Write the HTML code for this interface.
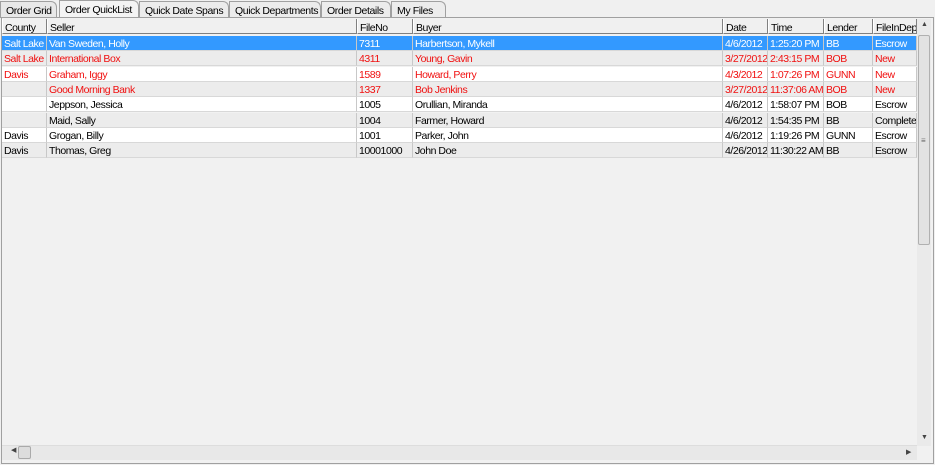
<!DOCTYPE html><html><head><style>
*{margin:0;padding:0;box-sizing:border-box}
body{width:935px;height:465px;background:#f0f0f0;font-family:"Liberation Sans",sans-serif;font-size:10.5px;position:relative;overflow:hidden}
.tab{position:absolute;top:1px;height:17px;border:1px solid #a0a0a0;border-bottom:none;background:#ececec;padding:3px 0 0 5px;color:#000;font-size:10.5px;white-space:nowrap;overflow:hidden;border-top-right-radius:6px;letter-spacing:-0.4px}
.grid{position:absolute;left:1px;top:17px;width:933px;height:447px;border:1px solid #a0a0a0;background:#f1f1f1}
.row{position:absolute;left:2px;width:915px;height:15px}
.c{position:absolute;top:0;height:100%;padding:2px 0 0 2px;white-space:nowrap;overflow:hidden;border-right:1px solid #c8c8c8;border-bottom:1px solid #d8d8d8;letter-spacing:-0.45px}
.h .c{border-right:1px solid #808080;border-left:1px solid #fff;border-bottom:1px solid #808080;background:#f0f0f0;padding-top:3px}
.red{color:#f01010}.sel{background:#3399ff;color:#fff}
.w{background:#fff}.g{background:#ececec}
</style></head><body>
<div class="tab" style="left:0;width:57px;background:#e8e8e8">Order Grid</div>
<div class="tab" style="left:59px;width:80px;background:#f4f4f4;top:0;height:19px">Order QuickList</div>
<div class="tab" style="left:139px;width:90px">Quick Date Spans</div>
<div class="tab" style="left:229px;width:92px">Quick Departments</div>
<div class="tab" style="left:321px;width:70px">Order Details</div>
<div class="tab" style="left:391px;width:55px">My Files</div>
<div class="grid"></div>
<div style="position:absolute;left:917px;top:19px;width:14px;height:427px;background:#eaeaea"></div>
<div style="position:absolute;left:918px;top:35px;width:12px;height:210px;background:#e2e2e2;border:1px solid #b0b0b0;border-radius:2px"></div>
<div style="position:absolute;left:921px;top:136px;font-size:8px;color:#666">≡</div>
<div style="position:absolute;left:921px;top:21px;font-size:7px;color:#444">▲</div>
<div style="position:absolute;left:921px;top:434px;font-size:7px;color:#444">▼</div>
<div style="position:absolute;left:2px;top:445px;width:915px;height:15px;background:#e8e8e8;border-top:1px solid #ddd"></div>
<div style="position:absolute;left:11px;top:446px;width:6px;height:13px;font-size:7px;color:#444">◀</div>
<div style="position:absolute;left:18px;top:446px;width:13px;height:13px;background:#ddd;border:1px solid #aaa;border-radius:2px"></div>
<div style="position:absolute;left:906px;top:448px;font-size:7px;color:#444">▶</div>
<script>
var xs=[2,47,357,413,723,768,824,873,917];
function row(top,cls,vals,hdr){var d=document.createElement('div');d.className='row '+(hdr?'h ':'')+cls;d.style.top=top+'px';var s='';for(var i=0;i<8;i++){s+='<div class="c" style="left:'+(xs[i]-2)+'px;width:'+(xs[i+1]-xs[i])+'px">'+(vals[i]||'')+'</div>'}d.innerHTML=s;document.body.appendChild(d)}
row(19,'',['County','Seller','FileNo','Buyer','Date','Time','Lender','FileInDept'],1);
var data=[['sel',['Salt Lake','Van Sweden, Holly','7311','Harbertson, Mykell','4/6/2012','1:25:20 PM','BB','Escrow']],
['g red',['Salt Lake','International Box','4311','Young, Gavin','3/27/2012','2:43:15 PM','BOB','New']],
['w red',['Davis','Graham, Iggy','1589','Howard, Perry','4/3/2012','1:07:26 PM','GUNN','New']],
['g red',['','Good Morning Bank','1337','Bob Jenkins','3/27/2012','11:37:06 AM','BOB','New']],
['w',['','Jeppson, Jessica','1005','Orullian, Miranda','4/6/2012','1:58:07 PM','BOB','Escrow']],
['g',['','Maid, Sally','1004','Farmer, Howard','4/6/2012','1:54:35 PM','BB','Completed']],
['w',['Davis','Grogan, Billy','1001','Parker, John','4/6/2012','1:19:26 PM','GUNN','Escrow']],
['g',['Davis','Thomas, Greg','10001000','John Doe','4/26/2012','11:30:22 AM','BB','Escrow']]];
for(var r=0;r<8;r++)row(36+Math.round(r*15.3),data[r][0],data[r][1]);
</script>
</body></html>
